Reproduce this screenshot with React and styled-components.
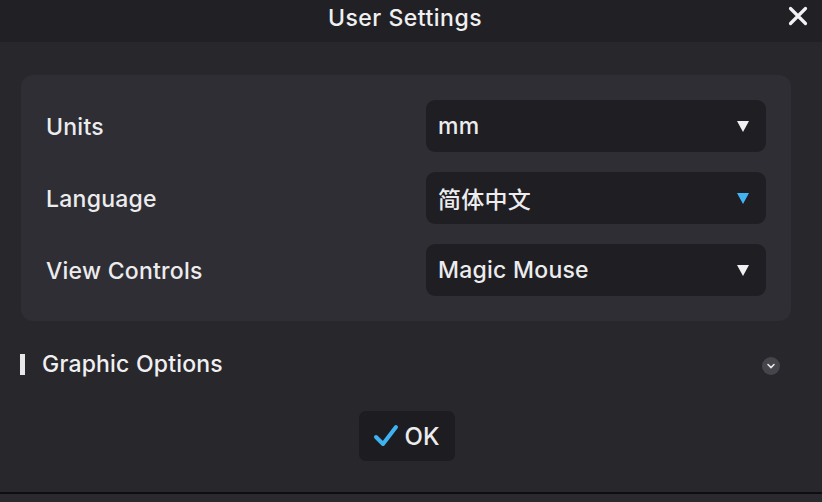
import React from "react";
import styled, { createGlobalStyle } from "styled-components";

const GlobalStyle = createGlobalStyle`
  html, body {
    margin: 0;
    padding: 0;
    background: #2a292e;
  }
  body {
    font-family: Inter, "Noto Sans CJK SC", sans-serif;
    color: #ececee;
  }
`;

const settings = [
  { label: "Units", value: "mm" },
  { label: "Language", value: "简体中文", active: true },
  { label: "View Controls", value: "Magic Mouse" },
];

const Window = styled.div`
  width: 822px;
  height: 502px;
  display: flex;
  flex-direction: column;
  background: #28272c;
  overflow: hidden;
`;

const TitleBar = styled.div`
  height: 42px;
  flex-shrink: 0;
  position: relative;
  display: flex;
  align-items: center;
  justify-content: center;
  padding-bottom: 6px;
  box-sizing: border-box;
  background: #212024;
`;

const Title = styled.div`
  font-size: 23px;
  font-weight: 500;
  letter-spacing: 0.5px;
  color: #f0f0f2;
  margin-right: 12px;
`;

const Close = styled.button`
  position: absolute;
  right: 12px;
  top: 4px;
  width: 24px;
  height: 24px;
  padding: 0;
  border: none;
  background: none;
  display: flex;
  align-items: center;
  justify-content: center;
`;

const Body = styled.div`
  flex: 1;
  display: flex;
  flex-direction: column;
  padding: 33px 31px 0 21px;
`;

const Card = styled.div`
  background: #2f2e34;
  border-radius: 12px;
  padding: 25px 25px;
  display: flex;
  flex-direction: column;
  gap: 20px;
`;

const Row = styled.div`
  display: flex;
  align-items: center;
  justify-content: space-between;
`;

const Label = styled.div`
  font-size: 23px;
  font-weight: 500;
  letter-spacing: 0.25px;
  color: #ececee;
  padding-top: 1px;
`;

const Select = styled.div`
  width: 340px;
  height: 52px;
  box-sizing: border-box;
  border-radius: 9px;
  background: #1f1e22;
  display: flex;
  align-items: center;
  justify-content: space-between;
  padding: 0 17px 0 12px;
  font-size: 23px;
  font-weight: 500;
  letter-spacing: 0.25px;
  color: #ececee;
`;

const Caret = styled.span`
  width: 0;
  height: 0;
  border-left: 6px solid transparent;
  border-right: 6px solid transparent;
  border-top: 11px solid ${(p) => (p.active ? "#42b4f4" : "#f0f0f2")};
`;

const Section = styled.div`
  height: 46px;
  margin-top: 20px;
  margin-left: -1px;
  display: flex;
  align-items: center;
  justify-content: space-between;
`;

const SectionTitle = styled.div`
  display: flex;
  align-items: center;
  gap: 17px;
  font-size: 23px;
  font-weight: 500;
  letter-spacing: 0.2px;
  color: #f0f0f2;
  &::before {
    content: "";
    width: 5px;
    height: 21px;
    background: #e8e8ea;
  }
`;

const Chevron = styled.div`
  width: 18px;
  height: 18px;
  border-radius: 50%;
  background: #46454b;
  display: flex;
  align-items: center;
  justify-content: center;
  margin-right: 11px;
  margin-top: 3px;
`;

const Footer = styled.div`
  display: flex;
  justify-content: center;
  margin-top: 24px;
  padding-left: 2px;
`;

const OkButton = styled.button`
  width: 96px;
  height: 50px;
  border: none;
  border-radius: 7px;
  background: #1d1c20;
  color: #ececee;
  font-family: Inter, sans-serif;
  font-size: 24px;
  font-weight: 500;
  display: flex;
  align-items: center;
  justify-content: center;
  gap: 6px;
  padding: 0 2px 0 0;
`;

const BottomEdge = styled.div`
  height: 8px;
  flex-shrink: 0;
  border-top: 2px solid #0e0e10;
  background: #2a2a2e;
`;

export default function App() {
  return (
    <>
      <GlobalStyle />
      <Window>
        <TitleBar>
          <Title>User Settings</Title>
          <Close aria-label="close">
            <svg width="20" height="20" viewBox="0 0 20 20">
              <path d="M2.5 2.5 L17.5 17.5 M17.5 2.5 L2.5 17.5" stroke="#f2f2f4" strokeWidth="3.2" strokeLinecap="round" />
            </svg>
          </Close>
        </TitleBar>
        <Body>
          <Card>
            {settings.map((s) => (
              <Row key={s.label}>
                <Label>{s.label}</Label>
                <Select>
                  <span>{s.value}</span>
                  <Caret active={s.active} />
                </Select>
              </Row>
            ))}
          </Card>
          <Section>
            <SectionTitle>Graphic Options</SectionTitle>
            <Chevron>
              <svg width="10" height="8" viewBox="0 0 10 8">
                <path d="M2 2.5 L5 5.5 L8 2.5" stroke="#e8e8ea" strokeWidth="1.6" fill="none" strokeLinecap="round" />
              </svg>
            </Chevron>
          </Section>
          <Footer>
            <OkButton>
              <svg width="26" height="24" viewBox="0 0 26 24">
                <path d="M3 13 L10 20 L23 3" stroke="#3fb3f2" strokeWidth="4" fill="none" strokeLinecap="round" strokeLinejoin="round" />
              </svg>
              OK
            </OkButton>
          </Footer>
        </Body>
        <BottomEdge />
      </Window>
    </>
  );
}
